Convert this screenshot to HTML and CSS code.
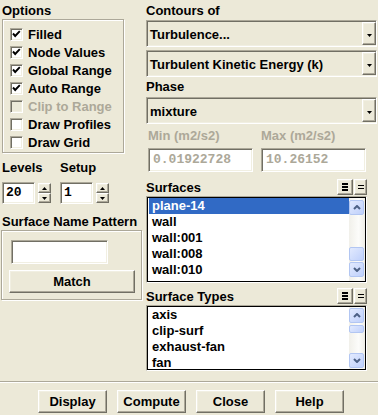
FILE: index.html
```html
<!DOCTYPE html>
<html lang="en">
<head>
    <meta charset="UTF-8">
    <title>Contours</title>
    <link rel="stylesheet" href="styles.css">
</head>
<body>
    <div class="main">
        <!-- left column: options, levels, surface pattern -->
        <div class="left">
            <div class="label">Options</div>
            <div class="group options">
                <div class="check"><span class="box"><svg width="11" height="11"><polyline points="2,4.5 4.2,7 8.8,2.2" /></svg></span>Filled</div>
                <div class="check"><span class="box"><svg width="11" height="11"><polyline points="2,4.5 4.2,7 8.8,2.2" /></svg></span>Node Values</div>
                <div class="check"><span class="box"><svg width="11" height="11"><polyline points="2,4.5 4.2,7 8.8,2.2" /></svg></span>Global Range</div>
                <div class="check"><span class="box"><svg width="11" height="11"><polyline points="2,4.5 4.2,7 8.8,2.2" /></svg></span>Auto Range</div>
                <div class="check disabled"><span class="box"></span>Clip to Range</div>
                <div class="check"><span class="box"></span>Draw Profiles</div>
                <div class="check"><span class="box"></span>Draw Grid</div>
            </div>

            <div class="spin-fields">
                <div class="spin-field">
                    <div class="label">Levels</div>
                    <div class="spin-row">
                        <div class="num sunken">20</div>
                        <div class="spinner">
                            <div class="spin-btn raised"><svg width="5" height="3"><polygon points="0,3 5,3 2.5,0" /></svg></div>
                            <div class="spin-btn raised"><svg width="5" height="3"><polygon points="0,0 5,0 2.5,3" /></svg></div>
                        </div>
                    </div>
                </div>
                <div class="spin-field">
                    <div class="label">Setup</div>
                    <div class="spin-row">
                        <div class="num sunken">1</div>
                        <div class="spinner">
                            <div class="spin-btn raised"><svg width="5" height="3"><polygon points="0,3 5,3 2.5,0" /></svg></div>
                            <div class="spin-btn raised"><svg width="5" height="3"><polygon points="0,0 5,0 2.5,3" /></svg></div>
                        </div>
                    </div>
                </div>
            </div>

            <div class="label pattern-label">Surface Name Pattern</div>
            <div class="group pattern">
                <div class="text-input sunken"></div>
                <div class="btn raised match">Match</div>
            </div>
        </div>

        <!-- right column: contours, phase, range, surfaces -->
        <div class="right">
            <div class="label tall">Contours of</div>
            <div class="select sunken">
                <span>Turbulence...</span>
                <span class="select-arrow raised"><svg width="5" height="3"><polygon points="0,0 5,0 2.5,3" /></svg></span>
            </div>
            <div class="select sunken gap">
                <span>Turbulent Kinetic Energy (k)</span>
                <span class="select-arrow raised"><svg width="5" height="3"><polygon points="0,0 5,0 2.5,3" /></svg></span>
            </div>
            <div class="label phase">Phase</div>
            <div class="select sunken">
                <span>mixture</span>
                <span class="select-arrow raised"><svg width="5" height="3"><polygon points="0,0 5,0 2.5,3" /></svg></span>
            </div>

            <div class="range">
                <div class="range-field">
                    <div class="label range-label">Min (m2/s2)</div>
                    <div class="range-input sunken">0.01922728</div>
                </div>
                <div class="range-field">
                    <div class="label range-label">Max (m2/s2)</div>
                    <div class="range-input sunken">10.26152</div>
                </div>
            </div>

            <div class="list-head first">
                <span>Surfaces</span>
                <div class="list-tools">
                    <span class="tool raised all"><svg width="6" height="8"><rect x="0" y="0" width="6" height="2" /><rect x="0" y="3" width="6" height="2" /><rect x="0" y="6" width="6" height="2" /></svg></span>
                    <span class="tool raised none"><svg width="6" height="4"><rect x="0" y="0" width="6" height="1" /><rect x="0" y="3" width="6" height="1" /></svg></span>
                </div>
            </div>
            <div class="list surfaces">
                <div class="list-inner">
                    <div class="items">
                        <div class="item selected">plane-14</div>
                        <div class="item">wall</div>
                        <div class="item">wall:001</div>
                        <div class="item">wall:008</div>
                        <div class="item">wall:010</div>
                    </div>
                    <div class="scrollbar">
                        <div class="sb-btn"><svg width="8" height="5"><polyline points="1,4 4,1 7,4" /></svg></div>
                        <div class="sb-track"><div class="sb-thumb"></div></div>
                        <div class="sb-btn"><svg width="8" height="5"><polyline points="1,1 4,4 7,1" /></svg></div>
                    </div>
                </div>
            </div>

            <div class="list-head">
                <span>Surface Types</span>
                <div class="list-tools">
                    <span class="tool raised all"><svg width="6" height="8"><rect x="0" y="0" width="6" height="2" /><rect x="0" y="3" width="6" height="2" /><rect x="0" y="6" width="6" height="2" /></svg></span>
                    <span class="tool raised none"><svg width="6" height="4"><rect x="0" y="0" width="6" height="1" /><rect x="0" y="3" width="6" height="1" /></svg></span>
                </div>
            </div>
            <div class="list types">
                <div class="list-inner">
                    <div class="items">
                        <div class="item">axis</div>
                        <div class="item">clip-surf</div>
                        <div class="item">exhaust-fan</div>
                        <div class="item">fan</div>
                    </div>
                    <div class="scrollbar">
                        <div class="sb-btn"><svg width="8" height="5"><polyline points="1,4 4,1 7,4" /></svg></div>
                        <div class="sb-track"><div class="sb-thumb"></div></div>
                        <div class="sb-btn"><svg width="8" height="5"><polyline points="1,1 4,4 7,1" /></svg></div>
                    </div>
                </div>
            </div>
        </div>
    </div>

    <div class="separator"></div>

    <div class="actions">
        <div class="btn raised">Display</div>
        <div class="btn raised">Compute</div>
        <div class="btn raised">Close</div>
        <div class="btn raised">Help</div>
    </div>
</body>
</html>
```

FILE: styles.css
```css
/* Base panel */
body {
    margin: 0;
    width: 378px;
    height: 415px;
    overflow: hidden;
    background-color: #ece9d8;
    color: #000;
    font: bold 13px "Liberation Sans", Arial, sans-serif;
}

/* Bevels */
.sunken {
    border: 1px solid;
    border-color: #aca899 #fff #fff #aca899;
    box-shadow: inset 1px 1px 0 #716f64, inset -1px -1px 0 #f1efe2;
}
.raised {
    border: 1px solid;
    border-color: #fff #716f64 #716f64 #fff;
    box-shadow: inset -1px -1px 0 #aca899, inset 1px 1px 0 #f1efe2;
    background-color: #ece9d8;
}

.main {
    display: flex;
    gap: 10px;
    height: 381px;
    padding: 2px 0 0 2px;
    box-sizing: border-box;
}

.label {
    height: 17px;
    line-height: 17px;
    white-space: nowrap;
}

/* Left column */
.left {
    width: 134px;
    flex: none;
}
.group {
    border: 1px solid #aca899;
    box-shadow: 1px 1px 0 #fff, inset 1px 1px 0 #fff;
}
.options {
    width: 122px;
    box-sizing: border-box;
    padding: 5px 0 1px 7px;
}
.check {
    display: flex;
    align-items: center;
    height: 18px;
    white-space: nowrap;
}
.check.disabled {
    color: #aca899;
}
.box {
    width: 13px;
    height: 13px;
    box-sizing: border-box;
    margin-right: 5px;
    background: #fff;
    border: 1px solid;
    border-color: #aca899 #fff #fff #aca899;
    box-shadow: inset 1px 1px 0 #716f64, inset -1px -1px 0 #f1efe2;
}
.check.disabled .box {
    background: #ece9d8;
}
.box svg {
    display: block;
}
.box polyline {
    fill: none;
    stroke: #000;
    stroke-width: 1.9;
}

.spin-fields {
    display: flex;
    gap: 9px;
    margin-top: 6px;
}
.spin-field .label {
    margin-bottom: 6px;
}
.spin-row {
    display: flex;
    align-items: center;
    gap: 3px;
}
.num {
    width: 33px;
    height: 22px;
    box-sizing: border-box;
    background: #fff;
    padding-left: 3px;
    font: bold 13px "Liberation Mono", "Courier New", monospace;
    line-height: 20px;
}
.spinner {
    display: flex;
    flex-direction: column;
    width: 13px;
}
.spin-btn {
    height: 10px;
    box-sizing: border-box;
    display: flex;
    align-items: center;
    justify-content: center;
}
.spin-btn svg, .select-arrow svg {
    display: block;
}

.pattern-label {
    margin-top: 9px;
}
.pattern {
    width: 141px;
    box-sizing: border-box;
    margin-left: -1px;
    padding: 9px 0 6px 0;
}
.text-input {
    width: 97px;
    height: 24px;
    box-sizing: border-box;
    margin-left: 9px;
    background: #fff;
}
.btn.match {
    width: 126px;
    margin: 6px 0 0 7px;
}

/* Right column */
.right {
    width: 231px;
    flex: none;
}
.label.tall {
    height: 18px;
    line-height: 18px;
}
.select {
    display: flex;
    align-items: stretch;
    height: 27px;
    box-sizing: border-box;
    padding-left: 3px;
    background-color: #ece9d8;
}
.select span:first-child {
    align-self: center;
    padding-top: 1px;
}
.select.gap {
    margin-top: 3px;
}
.select-arrow {
    margin-left: auto;
    width: 14px;
    box-sizing: border-box;
    margin-top: 1px;
    margin-bottom: 1px;
    display: flex;
    align-items: center;
    justify-content: center;
    padding-top: 3px;
}
.label.phase {
    height: 20px;
    line-height: 20px;
}

.range {
    display: flex;
    gap: 8px;
    padding-left: 2px;
    color: #aca899;
}
.range-field {
    width: 105px;
}
.label.range-label {
    height: 24px;
    line-height: 24px;
}
.range-input {
    height: 24px;
    box-sizing: border-box;
    background: #fff;
    padding-left: 4px;
    font: bold 13px "Liberation Mono", "Courier New", monospace;
    line-height: 22px;
}

/* Lists */
.list-head {
    display: flex;
    align-items: flex-end;
    justify-content: space-between;
    width: 221px;
    height: 22px;
    line-height: 16px;
}
.list-head.first {
    height: 24px;
}
.list-tools {
    display: flex;
    gap: 1px;
    margin-bottom: 1px;
}
.tool {
    height: 16px;
    box-sizing: border-box;
    display: flex;
    align-items: center;
    justify-content: center;
}
.tool.all {
    width: 16px;
}
.tool.none {
    width: 13px;
}
.tool svg {
    display: block;
}
.list {
    width: 221px;
    box-sizing: border-box;
    border: 1px solid;
    border-color: #aca899 #fff #fff #aca899;
}
.list.surfaces {
    height: 87px;
}
.list.types {
    height: 66px;
}
.list-inner {
    display: flex;
    height: 100%;
    box-sizing: border-box;
    border: 1px solid #000;
    background: #fff;
}
.items {
    flex: 1;
    padding-left: 1px;
}
.item {
    height: 16px;
    line-height: 16px;
    padding-left: 3px;
}
.item.selected {
    background: #316ac5;
    color: #fff;
}

.scrollbar {
    width: 16px;
    display: flex;
    flex-direction: column;
    box-sizing: border-box;
    padding: 2px 1px 4px 0;
    background: linear-gradient(to right, #f1f0ea, #fcfcfa 60%, #eeede6);
}
.types .scrollbar {
    padding: 1px 1px 1px 0;
}
.sb-btn, .sb-thumb {
    box-sizing: border-box;
    border: 1px solid #b2c6f2;
    border-radius: 2px;
    background: linear-gradient(135deg, #e2eafe, #bfd0fb);
}
.sb-btn {
    height: 15px;
    flex: none;
    display: flex;
    align-items: center;
    justify-content: center;
}
.sb-btn svg {
    display: block;
}
.sb-btn polyline {
    fill: none;
    stroke: #4d6185;
    stroke-width: 2;
}
.sb-track {
    flex: 1;
}
.sb-thumb {
    height: 14px;
    margin-top: 32px;
}
.types .sb-thumb {
    height: 8px;
    margin-top: 2px;
}

/* Bottom bar */
.separator {
    border-top: 1px solid #aca899;
    border-bottom: 1px solid #fff;
}
.actions {
    display: flex;
    justify-content: center;
    gap: 10px;
    padding: 7px 0 0 4px;
}
.btn {
    width: 69px;
    height: 23px;
    box-sizing: border-box;
    display: flex;
    align-items: center;
    justify-content: center;
}
```
